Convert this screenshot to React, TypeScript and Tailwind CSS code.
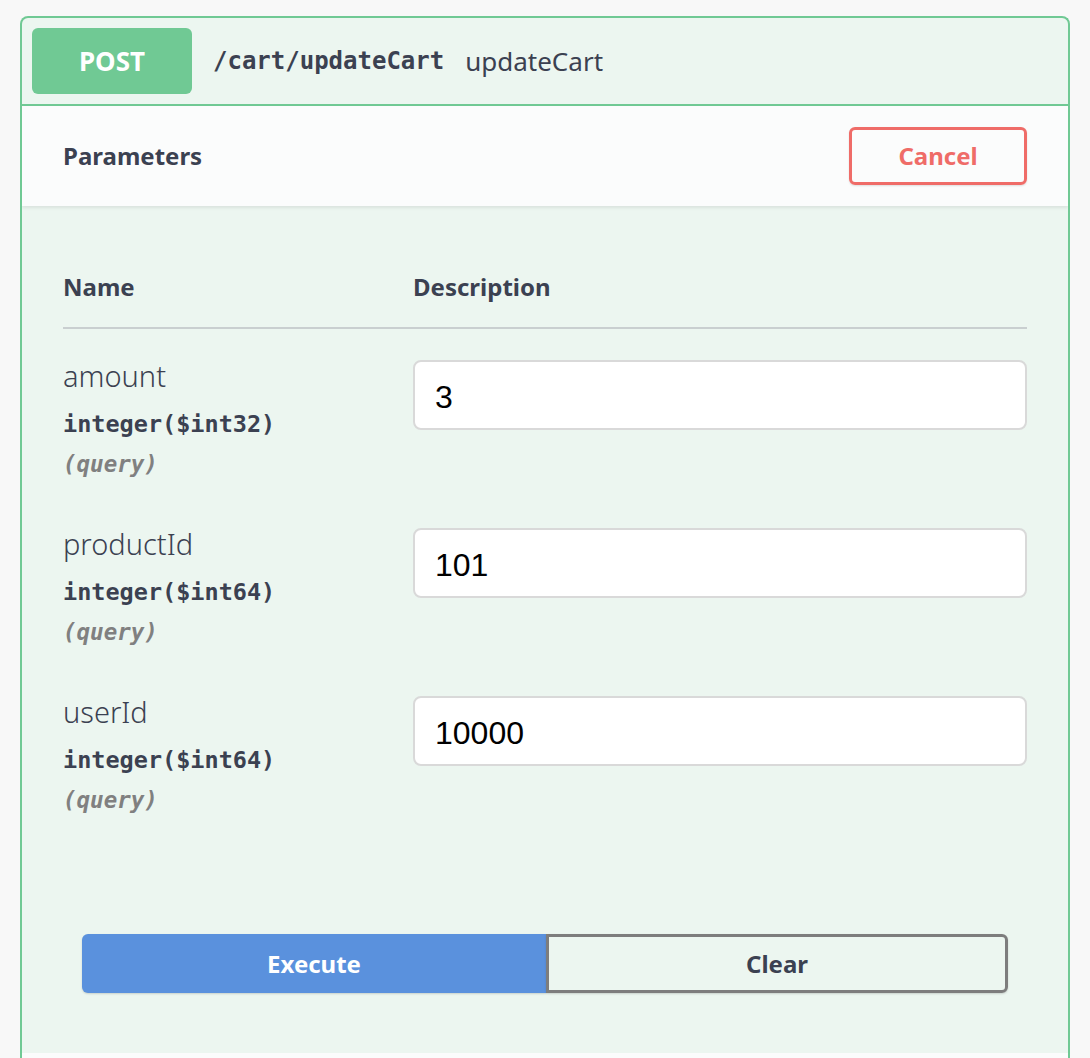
import React from 'react';

interface Param {
  name: string;
  type: string;
  value: string;
}

const params: Param[] = [
  { name: 'amount', type: 'integer($int32)', value: '3' },
  { name: 'productId', type: 'integer($int64)', value: '101' },
  { name: 'userId', type: 'integer($int64)', value: '10000' },
];

const sans = "font-['Noto_Sans',_'Open_Sans',_sans-serif]";
const mono = "font-['DejaVu_Sans_Mono',_'Liberation_Mono',_monospace]";

const ParamRow: React.FC<{ param: Param }> = ({ param }) => (
  <div className="flex pt-[31px] pb-[17px]">
    <div className="w-[350px] flex-none">
      <div className={`${sans} h-[32px] text-[29px] leading-[32px] font-light text-[#3b4151]`}>
        {param.name}
      </div>
      <div className={`${mono} mt-[16px] h-[32px] text-[23.5px] leading-[32px] font-semibold text-[#3b4151]`}>
        {param.type}
      </div>
      <div className={`${mono} mt-[8px] h-[32px] text-[22.5px] leading-[32px] font-semibold italic text-[#808080]`}>
        (query)
      </div>
    </div>
    <div className="flex-1">
      <div className="flex h-[70px] items-center rounded-[8px] border-2 border-[#d9d9d9] bg-white pt-[4px] pl-[20px] font-['Liberation_Sans',_Arial,_sans-serif] text-[32px] text-black">
        {param.value}
      </div>
    </div>
  </div>
);

const App: React.FC = () => {
  return (
    <div className="min-h-[1058px] bg-[#f8f8f8] pt-[16px] pl-[20px]">
      <div className="w-[1050px] overflow-hidden rounded-t-[8px] border-2 border-b-0 border-[#70c994] bg-[#ecf6f0]">
        <div className="flex items-center border-b-2 border-[#70c994] py-[10px] pl-[10px]">
          <div className={`${sans} flex h-[66px] w-[160px] items-center justify-center rounded-[6px] bg-[#70c994] text-[26px] font-bold text-white`}>
            POST
          </div>
          <span className={`${mono} ml-[21px] text-[24px] font-semibold text-[#3b4151]`}>
            /cart/updateCart
          </span>
          <span className={`${sans} ml-[21px] text-[26px] text-[#3b4151]`}>updateCart</span>
        </div>

        <div className="relative flex h-[100px] items-center justify-between bg-[#fbfcfc] px-[41px] shadow-[0_2px_3px_rgba(0,0,0,0.08)]">
          <h4 className={`${sans} text-[24px] font-bold text-[#3b4151]`}>Parameters</h4>
          <button
            type="button"
            className={`${sans} flex h-[58px] w-[178px] items-center justify-center rounded-[6px] border-[3px] border-[#ef6c68] bg-transparent text-[24px] font-bold text-[#ef6c68] shadow-[0_1px_2px_rgba(0,0,0,0.12)]`}
          >
            Cancel
          </button>
        </div>

        <div className="px-[41px]">
          <div className={`${sans} flex border-b-2 border-[#c9cfd0] pt-[65px] pb-[24px] text-[24px] leading-[32px] font-bold text-[#3b4151]`}>
            <div className="w-[350px]">Name</div>
            <div>Description</div>
          </div>
          {params.map((p) => (
            <ParamRow key={p.name} param={p} />
          ))}
        </div>

        <div className="flex px-[60px] pt-[101px] pb-[60px]">
          <button
            type="button"
            className={`${sans} flex h-[59px] w-[464px] items-center justify-center rounded-l-[6px] bg-[#5a91dd] text-[24px] font-bold text-white shadow-[0_1px_2px_rgba(0,0,0,0.15)]`}
          >
            Execute
          </button>
          <button
            type="button"
            className={`${sans} flex h-[59px] flex-1 items-center justify-center rounded-r-[6px] border-[3px] border-[#7d7d7d] bg-transparent text-[24px] font-bold text-[#3b4151] shadow-[0_1px_2px_rgba(0,0,0,0.15)]`}
          >
            Clear
          </button>
        </div>

        <div className="h-[100px] bg-[#fbfcfc]" />
      </div>
    </div>
  );
};

export default App;
